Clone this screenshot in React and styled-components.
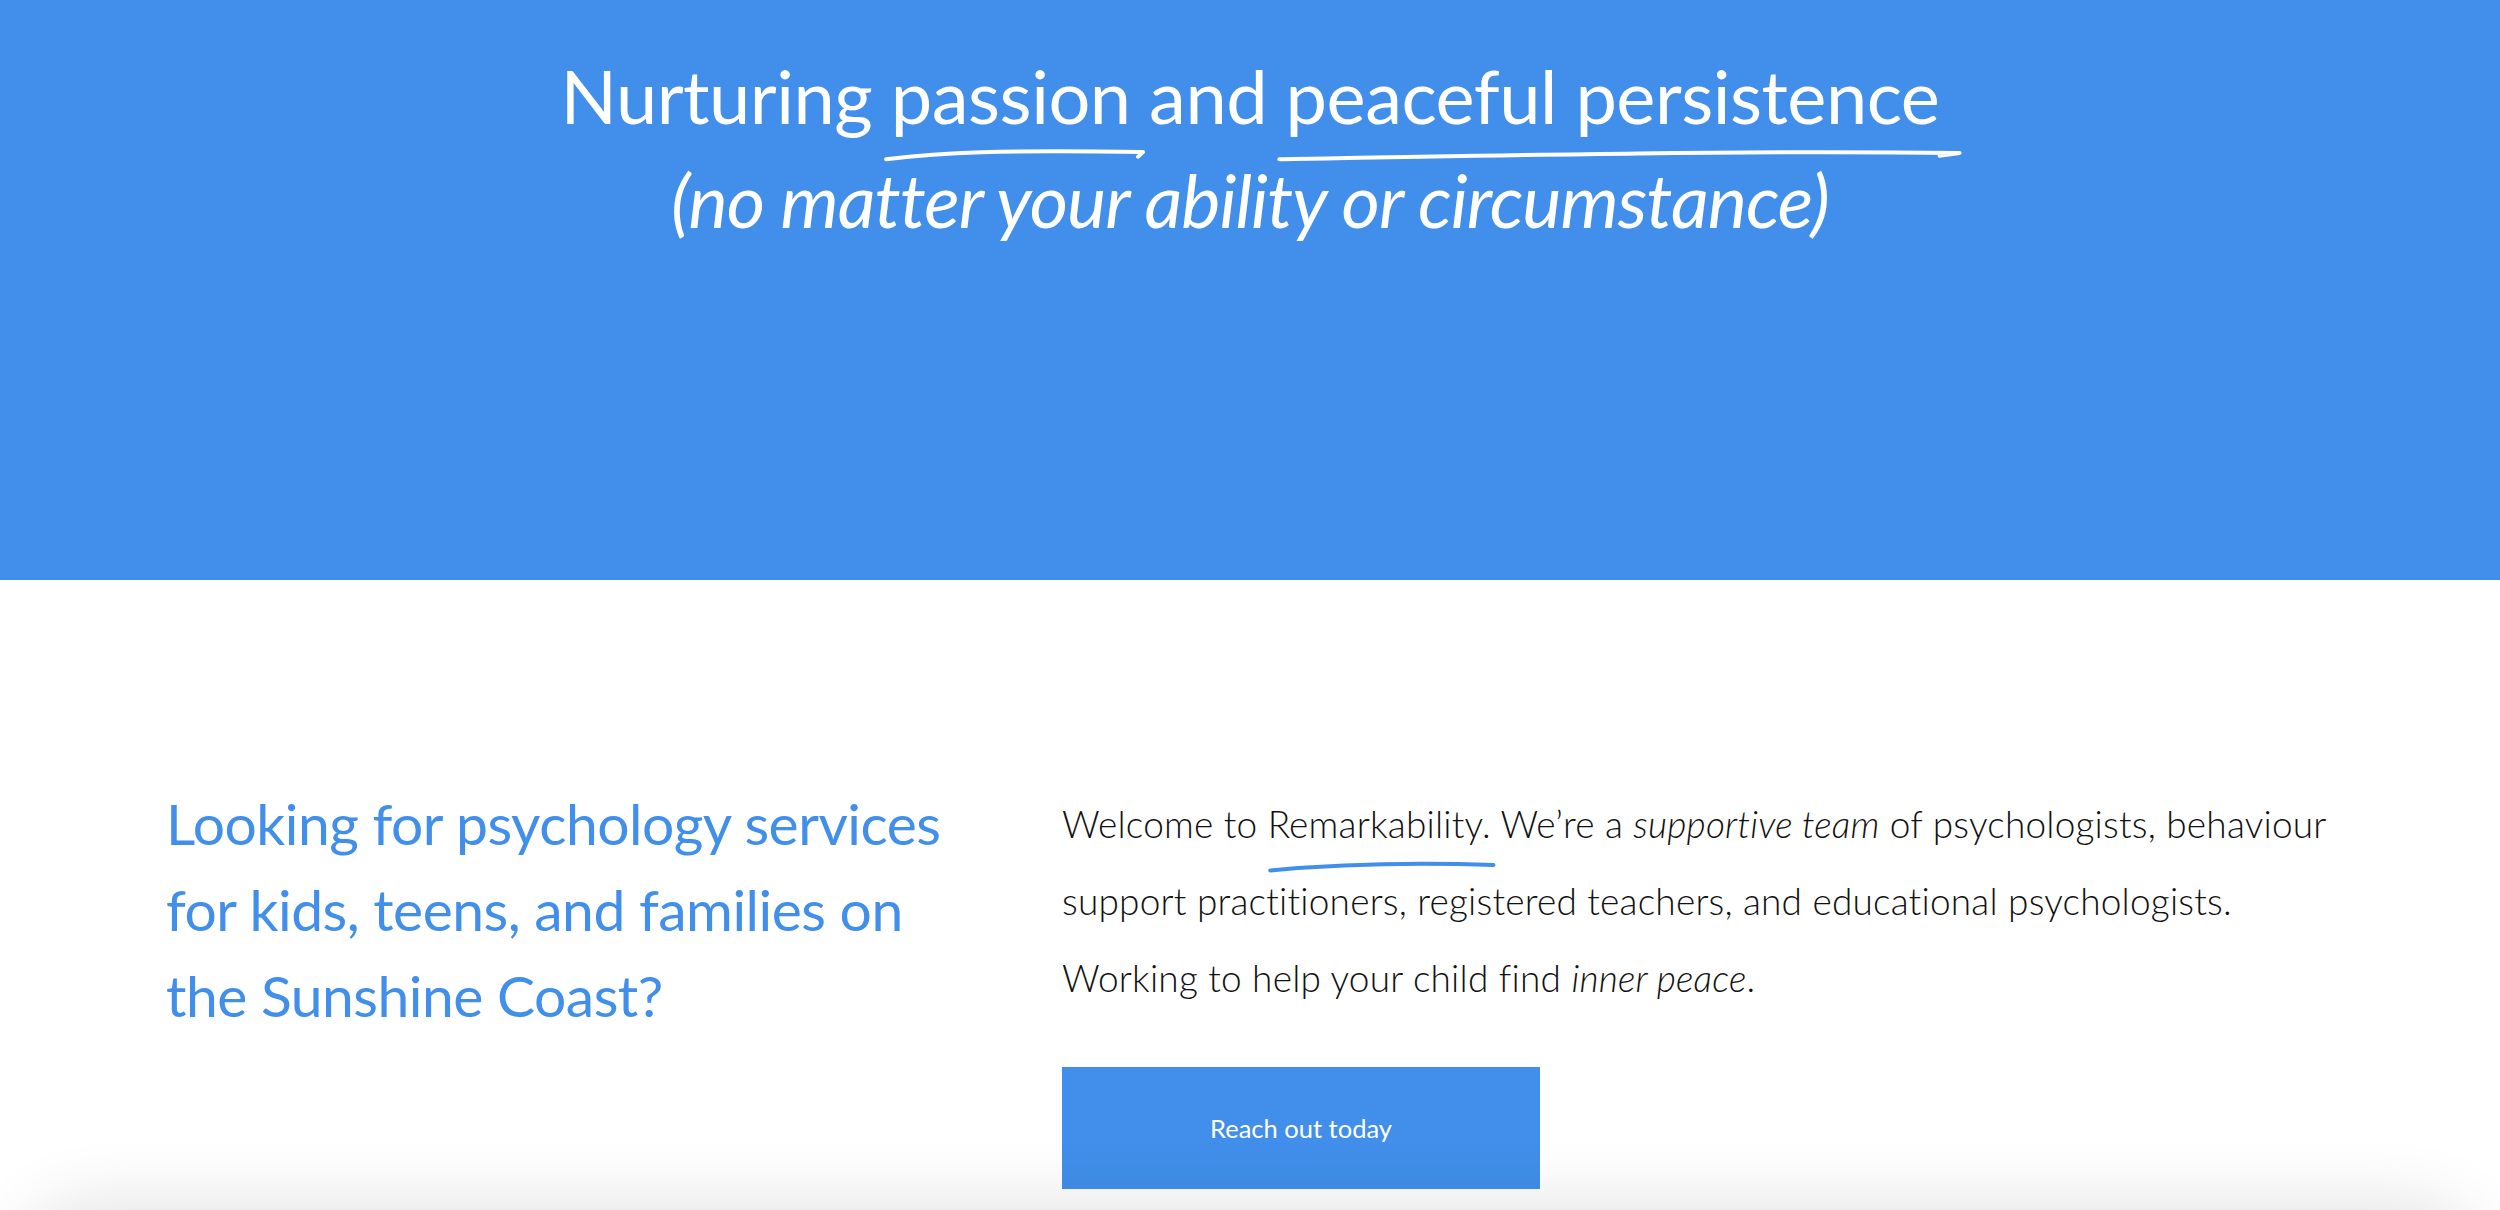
import React from "react";
import styled, { createGlobalStyle } from "styled-components";

const BLUE = "#418fea";

const GlobalStyle = createGlobalStyle`
  html, body {
    margin: 0;
    padding: 0;
    background: #fff;
    overflow: hidden;
  }
  body {
    font-family: Lato, "Open Sans", sans-serif;
  }
`;

const Swash = ({ d, color, width }) => (
  <SwashSvg viewBox="0 0 100 20" preserveAspectRatio="none">
    <path
      d={d}
      fill="none"
      stroke={color}
      strokeWidth={width}
      strokeLinecap="round"
      strokeLinejoin="round"
      vectorEffect="non-scaling-stroke"
    />
  </SwashSvg>
);

const App = () => {
  return (
    <>
      <GlobalStyle />
      <Hero>
        <Title>
          Nurturing{" "}
          <Marked $offset="4px" $h="18px">
            passion
            <Swash
              d="M-2 17 C 20 10, 45 6, 103 9 L 101 14"
              color="#fff"
              width={4}
            />
          </Marked>{" "}
          and{" "}
          <Marked $offset="4px" $h="18px">
            peaceful persistence
            <Swash
              d="M-1 17 C 35 12, 70 7, 101 10 L 98 13"
              color="#fff"
              width={4}
            />
          </Marked>
        </Title>
        <Subtitle>(no matter your ability or circumstance)</Subtitle>
      </Hero>

      <Intro>
        <Lead>
          Looking for psychology services for kids, teens, and families on the
          Sunshine Coast?
        </Lead>
        <Body>
          <Text>
            Welcome to{" "}
            <Marked $offset="2px" $h="14px">
              Remarkability.
              <Swash
                d="M1 15 C 30 6, 60 3, 99 7"
                color={BLUE}
                width={4}
              />
            </Marked>{" "}
            We’re a <em>supportive team</em> of psychologists, behaviour
            support practitioners, registered teachers, and educational
            psychologists. Working to help your child find <em>inner peace</em>.
          </Text>
          <Button href="#">Reach out today</Button>
        </Body>
      </Intro>
      <FooterShadow />
    </>
  );
};

export default App;

const Hero = styled.header`
  background: ${BLUE};
  height: 580px;
  box-sizing: border-box;
  padding-top: 44px;
  color: #fff;
  text-align: center;
`;

const Title = styled.h1`
  margin: 0;
  font-weight: 400;
  font-size: 74px;
  line-height: 104px;
  letter-spacing: -0.5px;
`;

const Subtitle = styled.p`
  margin: 0;
  font-style: italic;
  font-weight: 400;
  font-size: 74px;
  line-height: 104px;
  letter-spacing: -1px;
`;

const Marked = styled.span`
  position: relative;
  display: inline-block;

  svg {
    bottom: calc(-1 * ${(p) => p.$h} + ${(p) => p.$offset});
    height: ${(p) => p.$h};
  }
`;

const SwashSvg = styled.svg`
  position: absolute;
  left: 0;
  width: 102%;
  overflow: visible;
`;

const Intro = styled.section`
  display: grid;
  grid-template-columns: 796px 1fr;
  column-gap: 100px;
  padding: 200px 128px 0 166px;
`;

const Lead = styled.h2`
  margin: 0;
  color: ${BLUE};
  font-weight: 400;
  font-size: 57px;
  line-height: 86px;
  letter-spacing: -0.5px;
`;

const Body = styled.div`
  display: flex;
  flex-direction: column;
  align-items: flex-start;
  padding-top: 5px;
`;

const Text = styled.p`
  margin: 0;
  color: #111;
  font-weight: 300;
  font-size: 37px;
  line-height: 77px;
  letter-spacing: 0.2px;

  em {
    font-style: italic;
  }
`;

const Button = styled.a`
  display: flex;
  align-items: center;
  justify-content: center;
  margin-top: 51px;
  width: 478px;
  height: 122px;
  background: ${BLUE};
  color: #fff;
  font-size: 25.5px;
  text-decoration: none;
`;

const FooterShadow = styled.div`
  position: fixed;
  left: 30px;
  right: 30px;
  top: 1215px;
  height: 200px;
  border-radius: 60px;
  background: #eee;
  box-shadow: 0 0 70px 10px rgba(0, 0, 0, 0.12);
`;
